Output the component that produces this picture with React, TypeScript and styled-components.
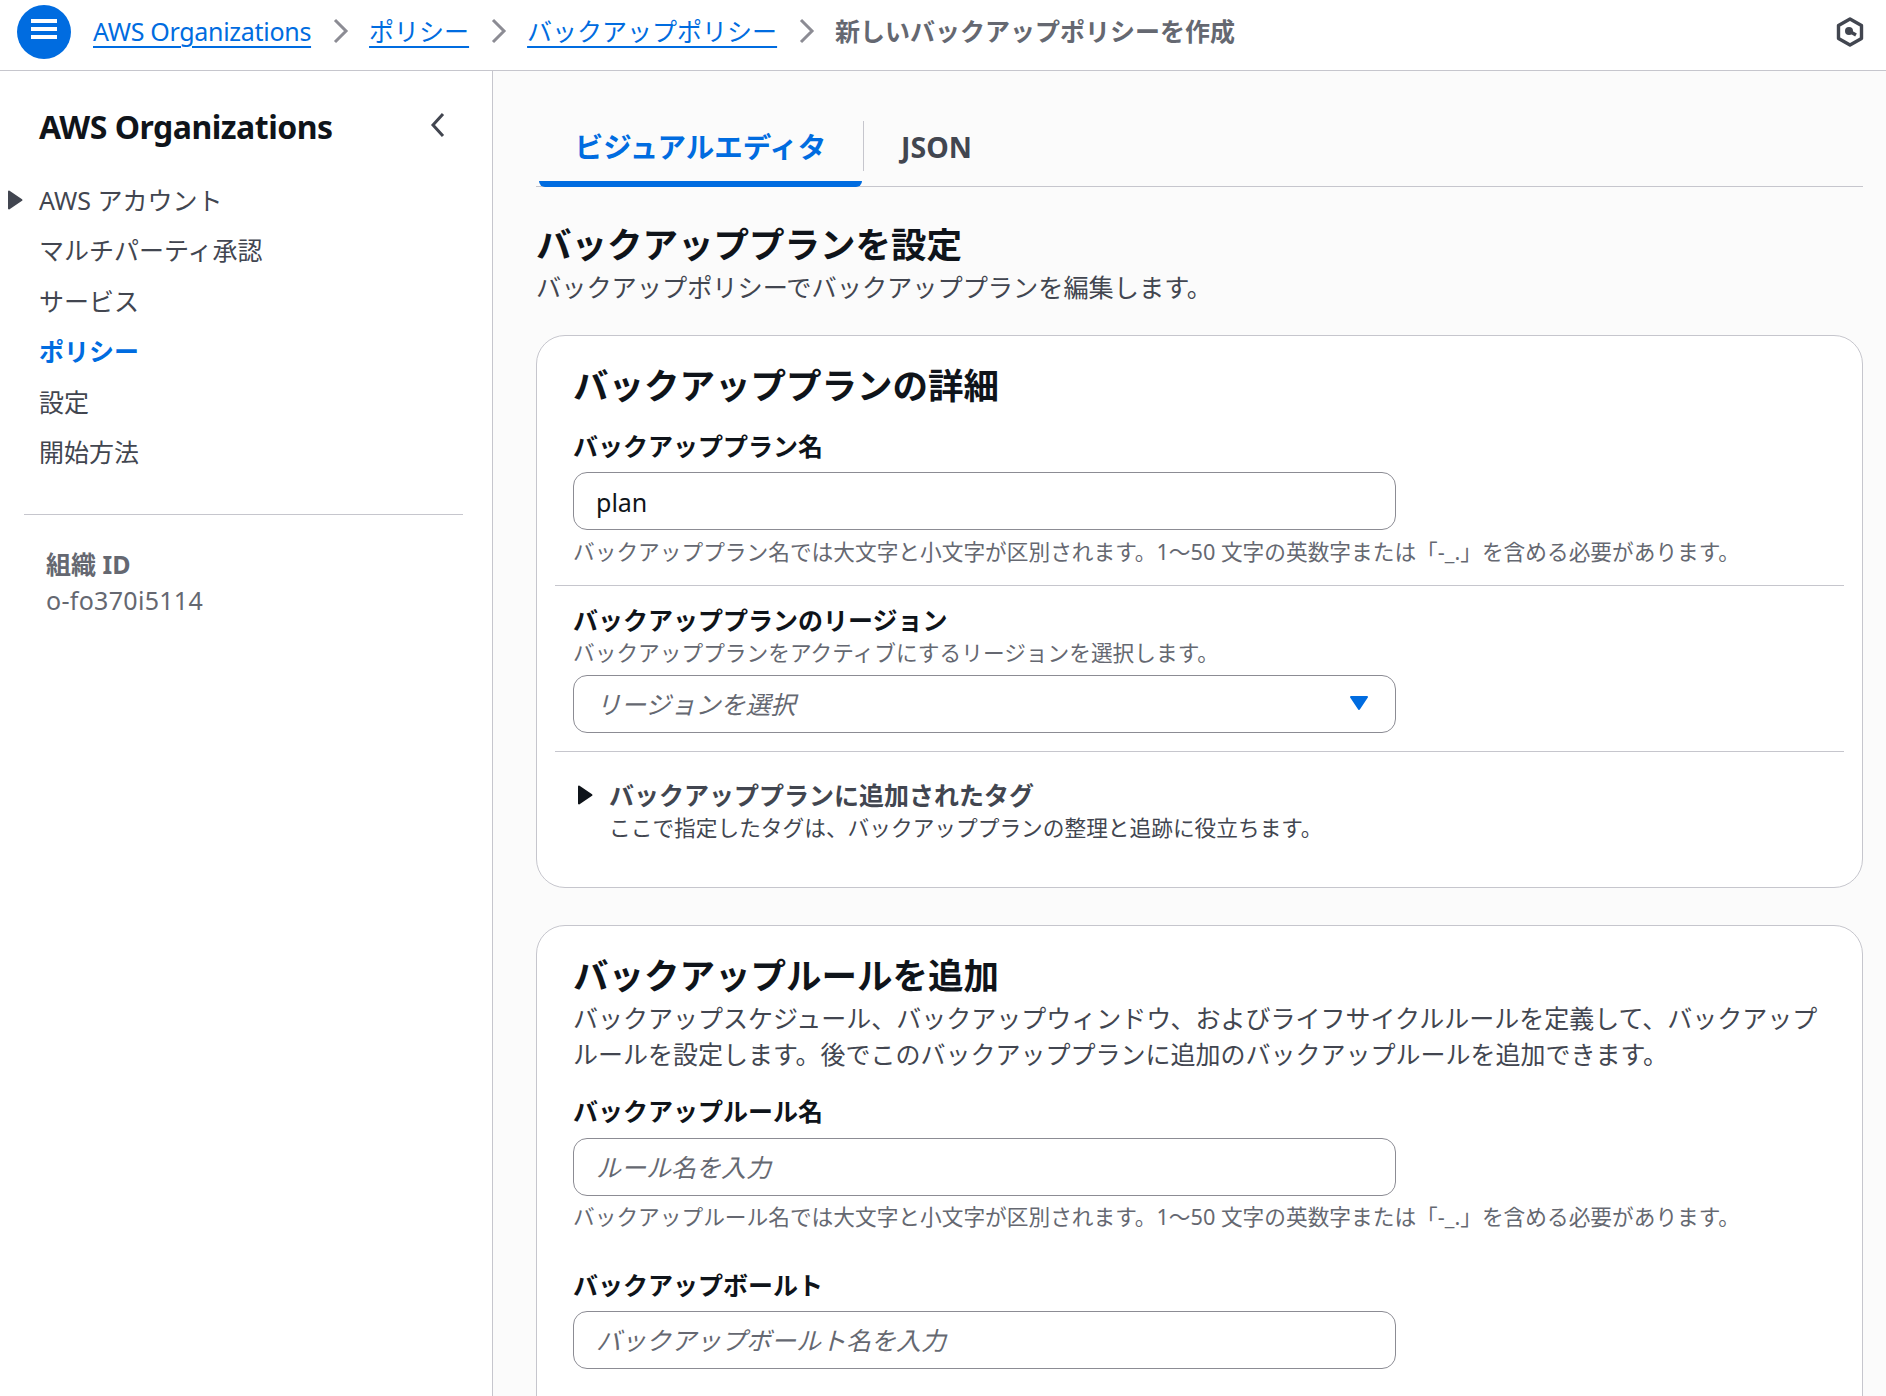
import React from "react";
import styled, { createGlobalStyle } from "styled-components";

const GlobalStyle = createGlobalStyle`
  html, body {
    margin: 0;
    padding: 0;
    height: 100%;
    overflow: hidden;
    background: #fff;
  }
  * {
    box-sizing: border-box;
  }
  body {
    font-family: "Noto Sans", "Noto Sans CJK JP", sans-serif;
    color: #0f141a;
  }
`;

const Page = styled.div`
  width: 1886px;
  height: 1396px;
  display: flex;
  flex-direction: column;
  overflow: hidden;
`;

const Header = styled.header`
  flex: 0 0 71px;
  display: flex;
  align-items: center;
  padding: 0 22px 1px 17px;
  background: #fff;
  border-bottom: 1px solid #c6c6cd;
`;

const MenuButton = styled.button`
  flex: 0 0 54px;
  width: 54px;
  height: 54px;
  margin: 0 22px 6px 0;
  padding: 0 0 5px;
  border: none;
  border-radius: 50%;
  background: #006ce0;
  display: flex;
  align-items: center;
  justify-content: center;
`;

const Crumbs = styled.nav`
  flex: 1;
  display: flex;
  align-items: center;
  padding-bottom: 7px;
  font-size: 25px;
  line-height: 34px;
`;

const CrumbLink = styled.a<{ $latin?: boolean }>`
  color: #006ce0;
  text-decoration: underline;
  text-underline-offset: 5px;
  text-decoration-thickness: 2px;
  letter-spacing: ${(p) => (p.$latin ? "-0.3px" : "0")};
`;

const CrumbCurrent = styled.span`
  color: #656871;
  font-weight: 700;
`;

const CrumbArrow = styled.svg`
  width: 16px;
  height: 26px;
  margin: 0 20px 0 22px;
`;

const SupportIcon = styled.svg`
  width: 28px;
  height: 30px;
  margin-bottom: 5px;
`;

const Body = styled.div`
  flex: 1;
  display: flex;
  min-height: 0;
`;

const Sidebar = styled.aside`
  flex: 0 0 493px;
  background: #fff;
  border-right: 1px solid #c6c6cd;
`;

const SideHead = styled.div`
  display: flex;
  align-items: center;
  justify-content: space-between;
  padding: 8px 46px 0 39px;
  height: 104px;
`;

const SideTitle = styled.h1`
  margin: 0;
  font-size: 32px;
  line-height: 46px;
  font-weight: 700;
  letter-spacing: -0.5px;
`;

const CollapseIcon = styled.svg`
  width: 16px;
  height: 26px;
  margin-bottom: 5px;
`;

const SideList = styled.ul`
  list-style: none;
  margin: 0;
  padding: 0 0 0 39px;
`;

const SideItem = styled.li<{ $active?: boolean }>`
  position: relative;
  height: 50.4px;
  line-height: 50px;
  font-size: 25px;
  color: ${(p) => (p.$active ? "#006ce0" : "#424650")};
  font-weight: ${(p) => (p.$active ? 700 : 400)};
`;

const SideCaret = styled.svg`
  position: absolute;
  left: -32px;
  top: 15px;
  width: 16px;
  height: 20px;
`;

const SideDivider = styled.hr`
  margin: 37px 29px 0 24px;
  border: none;
  border-top: 1px solid #c6c6cd;
`;

const OrgBlock = styled.div`
  padding: 31px 0 0 46px;
  color: #656871;
`;

const OrgLabel = styled.div`
  font-size: 25px;
  line-height: 36px;
  font-weight: 700;
`;

const OrgValue = styled.div`
  font-size: 25px;
  line-height: 36px;
  letter-spacing: 0.3px;
`;

const Main = styled.main`
  flex: 1;
  min-width: 0;
  background: #fbfbfb;
  padding: 0 23px 0 43px;
`;

const TabBar = styled.div`
  height: 116px;
  display: flex;
  align-items: flex-end;
  padding-left: 3px;
  border-bottom: 1px solid #c6c6cd;
`;

const Tab = styled.div<{ $active?: boolean }>`
  position: relative;
  width: ${(p) => (p.$active ? "323px" : "auto")};
  height: 65px;
  padding: 0 ${(p) => (p.$active ? "0" : "37px")};
  text-align: center;
  font-size: 28.5px;
  line-height: 50px;
  font-weight: 700;
  color: ${(p) => (p.$active ? "#006ce0" : "#424650")};
  border-radius: 0 0 6px 6px;
  border-bottom: ${(p) => (p.$active ? "6px solid #006ce0" : "none")};
  margin-bottom: -1px;
`;

const TabSeparator = styled.div`
  width: 1px;
  height: 50px;
  margin-bottom: 15px;
  margin-left: 1px;
  background: #c6c6cd;
`;

const PageHead = styled.div`
  margin: 34px 0 30px;
`;

const H2 = styled.h2`
  margin: 0;
  font-size: 35.5px;
  line-height: 46px;
  font-weight: 700;
  color: #0f141a;
`;

const PageDesc = styled.p`
  margin: 2px 0 0;
  font-size: 25.2px;
  line-height: 36px;
  color: #424650;
`;

const CardDesc = styled.p`
  margin: 2px 0 0;
  font-size: 25px;
  line-height: 36px;
  color: #424650;
`;

const Card = styled.section`
  background: #fff;
  border: 1px solid #c6c6cd;
  border-radius: 29px;
  padding: 0 18px;
  margin-bottom: 37px;
`;

const CardPart = styled.div<{ $divider?: boolean; $pt: number; $pb: number }>`
  padding: ${(p) => p.$pt}px 18px ${(p) => p.$pb}px;
  border-bottom: ${(p) => (p.$divider ? "1px solid #c6c6cd" : "none")};
`;

const Label = styled.label<{ $top?: number }>`
  display: block;
  margin-top: ${(p) => p.$top ?? 0}px;
  font-size: 25px;
  line-height: 34px;
  font-weight: 700;
  color: #0f141a;
`;

const Hint = styled.div<{ $top?: number }>`
  margin-top: ${(p) => p.$top ?? 0}px;
  font-size: 21.7px;
  line-height: 30px;
  color: #656871;
`;

const InputBox = styled.div<{ $top?: number; $placeholder?: boolean }>`
  display: flex;
  align-items: center;
  justify-content: space-between;
  width: 823px;
  height: 58px;
  margin-top: ${(p) => p.$top ?? 0}px;
  padding: ${(p) => (p.$placeholder ? "0 26px 2px 22px" : "2px 26px 0 22px")};
  background: #fff;
  border: 1px solid #8c8c94;
  border-radius: 14px;
  font-size: 25px;
  color: ${(p) => (p.$placeholder ? "#656871" : "#0f141a")};
  font-style: ${(p) => (p.$placeholder ? "italic" : "normal")};
`;

const Expander = styled.div`
  position: relative;
  padding-left: 36px;
`;

const ExpandCaret = styled.svg`
  position: absolute;
  left: 4px;
  top: 7px;
  width: 16px;
  height: 20px;
`;

const ExpandTitle = styled.div`
  font-size: 25px;
  line-height: 34px;
  font-weight: 700;
  color: #424650;
`;

const ExpandSub = styled.div`
  margin-top: 1px;
  font-size: 21.7px;
  line-height: 30px;
  color: #424650;
`;

const Caret = ({ as: Comp, fill }: { as: typeof SideCaret; fill: string }) => (
  <Comp viewBox="0 0 16 20">
    <path d="M2 1.5 L14.5 10 L2 18.5 Z" fill={fill} stroke={fill} strokeWidth="2" strokeLinejoin="round" />
  </Comp>
);

const Arrow = () => (
  <CrumbArrow viewBox="0 0 16 26">
    <path d="M2 2 L13 13 L2 24" fill="none" stroke="#8c8c94" strokeWidth="3" />
  </CrumbArrow>
);

export default function App() {
  return (
    <Page>
      <GlobalStyle />
      <Header>
        <MenuButton aria-label="メニュー">
          <svg width="26" height="20" viewBox="0 0 26 20">
            <path d="M0 2 H26 M0 10 H26 M0 18 H26" stroke="#fff" strokeWidth="3.8" />
          </svg>
        </MenuButton>
        <Crumbs>
          <CrumbLink href="#" $latin>
            AWS Organizations
          </CrumbLink>
          <Arrow />
          <CrumbLink href="#">ポリシー</CrumbLink>
          <Arrow />
          <CrumbLink href="#">バックアップポリシー</CrumbLink>
          <Arrow />
          <CrumbCurrent>新しいバックアップポリシーを作成</CrumbCurrent>
        </Crumbs>
        <SupportIcon viewBox="0 0 28 30">
          <path
            d="M14 2 L25.5 8.5 V21.5 L14 28 L2.5 21.5 V8.5 Z"
            fill="none"
            stroke="#424650"
            strokeWidth="3.4"
            strokeLinejoin="round"
          />
          <circle cx="13" cy="14" r="4" fill="#424650" />
          <path d="M13 14 L20 18" stroke="#424650" strokeWidth="3.4" />
        </SupportIcon>
      </Header>
      <Body>
        <Sidebar>
          <SideHead>
            <SideTitle>AWS Organizations</SideTitle>
            <CollapseIcon viewBox="0 0 16 26">
              <path d="M13 2 L3 13 L13 24" fill="none" stroke="#424650" strokeWidth="3" />
            </CollapseIcon>
          </SideHead>
          <SideList>
            <SideItem>
              <Caret as={SideCaret} fill="#424650" />
              AWS アカウント
            </SideItem>
            <SideItem>マルチパーティ承認</SideItem>
            <SideItem>サービス</SideItem>
            <SideItem $active>ポリシー</SideItem>
            <SideItem>設定</SideItem>
            <SideItem>開始方法</SideItem>
          </SideList>
          <SideDivider />
          <OrgBlock>
            <OrgLabel>組織 ID</OrgLabel>
            <OrgValue>o-fo370i5114</OrgValue>
          </OrgBlock>
        </Sidebar>
        <Main>
          <TabBar>
            <Tab $active>ビジュアルエディタ</Tab>
            <TabSeparator />
            <Tab>JSON</Tab>
          </TabBar>
          <PageHead>
            <H2>バックアッププランを設定</H2>
            <PageDesc>バックアップポリシーでバックアッププランを編集します。</PageDesc>
          </PageHead>
          <Card>
            <CardPart $divider $pt={26} $pb={18}>
              <H2>バックアッププランの詳細</H2>
              <Label $top={21}>バックアッププラン名</Label>
              <InputBox $top={9}>plan</InputBox>
              <Hint $top={7}>
                バックアッププラン名では大文字と小文字が区別されます。1〜50 文字の英数字または「-_.」を含める必要があります。
              </Hint>
            </CardPart>
            <CardPart $divider $pt={17} $pb={18}>
              <Label>バックアッププランのリージョン</Label>
              <Hint $top={1}>バックアッププランをアクティブにするリージョンを選択します。</Hint>
              <InputBox $top={7} $placeholder>
                リージョンを選択
                <svg width="20" height="16" viewBox="0 0 20 16">
                  <path d="M2 2 H18 L10 14 Z" fill="#006ce0" stroke="#006ce0" strokeWidth="2" strokeLinejoin="round" />
                </svg>
              </InputBox>
            </CardPart>
            <CardPart $pt={26} $pb={44}>
              <Expander>
                <Caret as={ExpandCaret} fill="#0f141a" />
                <ExpandTitle>バックアッププランに追加されたタグ</ExpandTitle>
                <ExpandSub>ここで指定したタグは、バックアッププランの整理と追跡に役立ちます。</ExpandSub>
              </Expander>
            </CardPart>
          </Card>
          <Card>
            <CardPart $pt={26} $pb={60}>
              <H2>バックアップルールを追加</H2>
              <CardDesc>
                バックアップスケジュール、バックアップウィンドウ、およびライフサイクルルールを定義して、バックアップルールを設定します。後でこのバックアッププランに追加のバックアップルールを追加できます。
              </CardDesc>
              <Label $top={22}>バックアップルール名</Label>
              <InputBox $top={10} $placeholder>
                ルール名を入力
              </InputBox>
              <Hint $top={6}>
                バックアップルール名では大文字と小文字が区別されます。1〜50 文字の英数字または「-_.」を含める必要があります。
              </Hint>
              <Label $top={36}>バックアップボールト</Label>
              <InputBox $top={9} $placeholder>
                バックアップボールト名を入力
              </InputBox>
            </CardPart>
          </Card>
        </Main>
      </Body>
    </Page>
  );
}
